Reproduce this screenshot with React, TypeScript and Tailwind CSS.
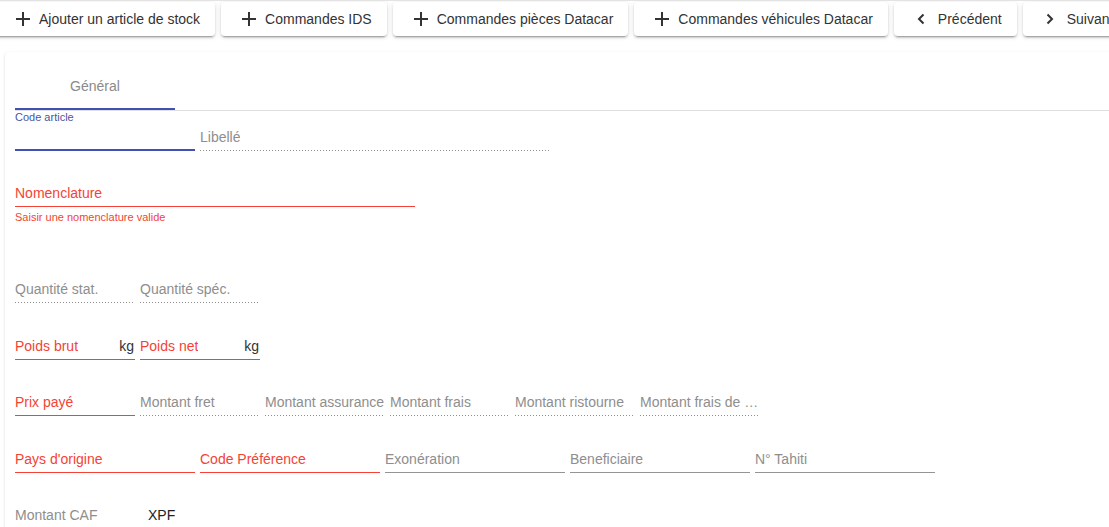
import type { ReactNode } from 'react';

type Tone = 'error' | 'disabled' | 'normal';

interface FieldProps {
  label: string;
  width: string;
  tone: Tone;
  suffix?: string;
}

const BUTTON_SHADOW =
  'shadow-[0_3px_1px_-2px_rgba(0,0,0,0.2),0_2px_2px_0_rgba(0,0,0,0.14),0_1px_5px_0_rgba(0,0,0,0.12)]';

function PlusIcon() {
  return (
    <svg width="24" height="24" viewBox="0 0 24 24" className="shrink-0 fill-[#333]">
      <path d="M19 13h-6v6h-2v-6H5v-2h6V5h2v6h6v2z" />
    </svg>
  );
}

function ChevronIcon({ dir }: { dir: 'left' | 'right' }) {
  return (
    <svg width="10" height="12" viewBox="0 0 10 12" className="shrink-0 fill-none stroke-[#333]" strokeWidth="2">
      {dir === 'left' ? <polyline points="7.5,1.5 3,6 7.5,10.5" /> : <polyline points="2.5,1.5 7,6 2.5,10.5" />}
    </svg>
  );
}

function ToolButton({
  icon,
  className = '',
  children,
}: {
  icon: 'plus' | 'left' | 'right';
  className?: string;
  children: ReactNode;
}) {
  const isPlus = icon === 'plus';
  return (
    <button
      className={`flex h-[34px] shrink-0 items-center whitespace-nowrap rounded bg-white pr-[15px] text-[14px] text-[#333] ${BUTTON_SHADOW} ${
        isPlus ? 'pl-[16px]' : 'pl-[22px]'
      } ${className}`}
    >
      {isPlus ? <PlusIcon /> : <ChevronIcon dir={icon} />}
      <span className={isPlus ? 'ml-1' : 'ml-[12px]'}>{children}</span>
    </button>
  );
}

// champ MUI "standard" : libellé posé sur la ligne
function Field({ label, width, tone, suffix }: FieldProps) {
  const line =
    tone === 'error'
      ? 'border-b border-[#f44336] pb-[3px]'
      : tone === 'normal'
      ? 'border-b border-[#949494] pb-[3px]'
      : 'bg-[repeating-linear-gradient(to_right,#8f8f8f_0_1px,transparent_1px_3px)] bg-[length:100%_1px] bg-bottom bg-no-repeat pb-[4px]';
  const color = tone === 'error' ? 'text-[#f44336]' : 'text-[#8e8e8e]';
  return (
    <div className={`flex h-[40px] shrink-0 items-end justify-between ${line} ${width}`}>
      <span className={`truncate text-[14px] leading-5 ${color}`}>{label}</span>
      {suffix && <span className="pr-[1px] text-[14px] leading-5 text-[#333]">{suffix}</span>}
    </div>
  );
}

export default function App() {
  return (
    <div
      className="h-[527px] w-[1109px] overflow-hidden border-t border-[#e3e3e3] bg-white"
      style={{ fontFamily: '"Liberation Sans", Arial, sans-serif' }}
    >
      {/* barre d'actions */}
      <div className="flex gap-[6px] pt-[1px]">
        <ToolButton icon="plus" className="-ml-[5px]">
          Ajouter un article de stock
        </ToolButton>
        <ToolButton icon="plus">Commandes IDS</ToolButton>
        <ToolButton icon="plus">Commandes pièces Datacar</ToolButton>
        <ToolButton icon="plus">Commandes véhicules Datacar</ToolButton>
        <ToolButton icon="left">Précédent</ToolButton>
        <ToolButton icon="right">Suivant</ToolButton>
      </div>

      {/* fiche article */}
      <div className="mt-[16px] ml-[5px] -mr-[30px] h-[600px] rounded bg-white pt-[11px] pl-[10px] shadow-[0_2px_1px_-1px_rgba(0,0,0,0.2),0_1px_1px_0_rgba(0,0,0,0.14),0_1px_3px_0_rgba(0,0,0,0.12)]">
        <div className="flex border-b border-[#e0e0e0]">
          <div className="flex h-[47px] w-[160px] items-center justify-center border-b-2 border-[#3f51b5] pt-[2px] text-[14px] text-[#8a8a8a]">
            Général
          </div>
        </div>

        <div className="flex gap-[5px]">
          <div className="flex h-[40px] w-[180px] shrink-0 flex-col justify-between border-b-2 border-[#3f51b5]">
            <span className="text-[11px] leading-[13px] text-[#4a569d]">Code article</span>
          </div>
          <Field label="Libellé" width="w-[350px]" tone="disabled" />
        </div>

        <div className="mt-[16px] flex">
          <Field label="Nomenclature" width="w-[400px]" tone="error" />
        </div>
        <div className="mt-[3px] text-[11px] leading-[14px] text-[#f44336]">Saisir une nomenclature valide</div>

        <div className="mt-[39px] flex gap-[5px]">
          <Field label="Quantité stat." width="w-[120px]" tone="disabled" />
          <Field label="Quantité spéc." width="w-[120px]" tone="disabled" />
        </div>

        <div className="mt-[17px] flex gap-[5px]">
          <Field label="Poids brut" width="w-[120px]" tone="error" suffix="kg" />
          <Field label="Poids net" width="w-[120px]" tone="error" suffix="kg" />
        </div>

        <div className="mt-[16px] flex gap-[5px]">
          <Field label="Prix payé" width="w-[120px]" tone="error" />
          <Field label="Montant fret" width="w-[120px]" tone="disabled" />
          <Field label="Montant assurance" width="w-[120px]" tone="disabled" />
          <Field label="Montant frais" width="w-[120px]" tone="disabled" />
          <Field label="Montant ristourne" width="w-[120px]" tone="disabled" />
          <Field label="Montant frais de transport" width="w-[120px]" tone="disabled" />
        </div>

        <div className="mt-[17px] flex gap-[5px]">
          <Field label="Pays d'origine" width="w-[180px]" tone="error" />
          <Field label="Code Préférence" width="w-[180px]" tone="error" />
          <Field label="Exonération" width="w-[180px]" tone="normal" />
          <Field label="Beneficiaire" width="w-[180px]" tone="normal" />
          <Field label="N° Tahiti" width="w-[180px]" tone="normal" />
        </div>

        <div className="mt-[16px] flex h-[40px] items-end pb-[4px] text-[14px] leading-5">
          <span className="w-[133px] text-[#8e8e8e]">Montant CAF</span>
          <span className="text-[#222]">XPF</span>
        </div>
      </div>
    </div>
  );
}
